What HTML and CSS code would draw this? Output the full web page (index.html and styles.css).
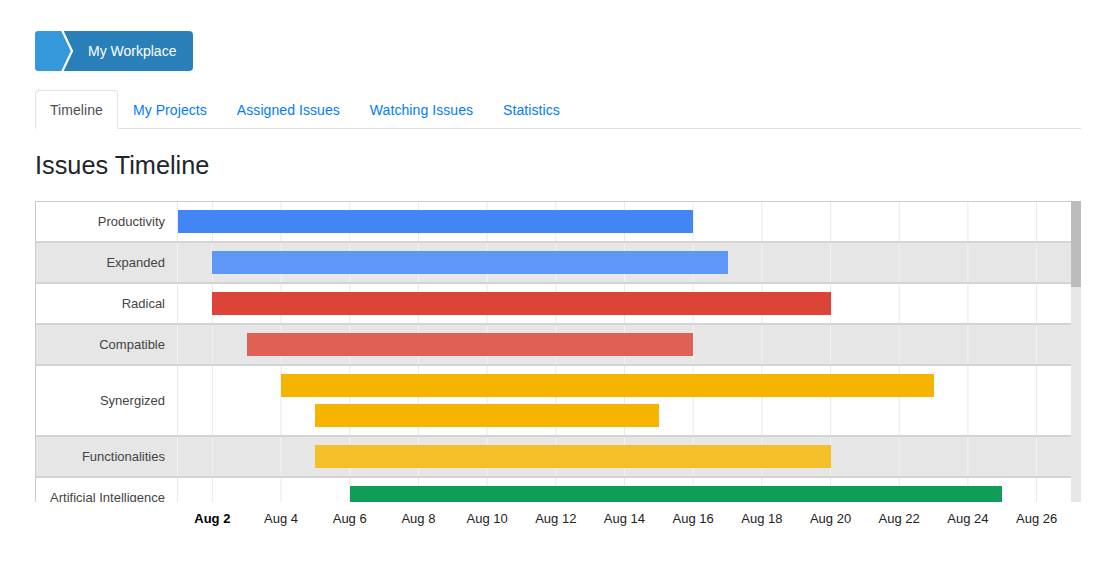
FILE: index.html
```html
<!DOCTYPE html>
<html lang="en">
<head>
<meta charset="utf-8">
<title>My Workplace - Timeline</title>
<link rel="stylesheet" href="styles.css">
</head>
<body>
<div class="page">
  <div class="crumb">
    <svg class="crumb-icon" width="40" height="40" viewBox="0 0 40 40" aria-hidden="true">
      <polygon points="0,0 26.5,0 36.5,20 26.5,40 0,40" fill="#3498db"/>
      <polyline points="27,-1 37,20 27,41" fill="none" stroke="#ffffff" stroke-width="2.2"/>
    </svg>
    <span class="crumb-text">My Workplace</span>
  </div>

  <ul class="tabs">
    <li><a class="tab active" href="#">Timeline</a></li>
    <li><a class="tab" href="#">My Projects</a></li>
    <li><a class="tab" href="#">Assigned Issues</a></li>
    <li><a class="tab" href="#">Watching Issues</a></li>
    <li><a class="tab" href="#">Statistics</a></li>
  </ul>

  <h2 class="title">Issues Timeline</h2>

  <div class="chart">
    <div class="chart-main">
      <div class="viewport">
        <div class="rows">
          <div class="row">
            <div class="label">Productivity</div>
            <div class="track"><div class="bar c1" style="margin-left:0%;width:57.692%"></div></div>
          </div>
          <div class="row alt">
            <div class="label">Expanded</div>
            <div class="track"><div class="bar c2" style="margin-left:3.846%;width:57.692%"></div></div>
          </div>
          <div class="row">
            <div class="label">Radical</div>
            <div class="track"><div class="bar c3" style="margin-left:3.846%;width:69.231%"></div></div>
          </div>
          <div class="row alt">
            <div class="label">Compatible</div>
            <div class="track"><div class="bar c4" style="margin-left:7.692%;width:50%"></div></div>
          </div>
          <div class="row">
            <div class="label">Synergized</div>
            <div class="track">
              <div class="bar c5" style="margin-left:11.538%;width:73.077%"></div>
              <div class="bar c5" style="margin-left:15.385%;width:38.462%"></div>
            </div>
          </div>
          <div class="row alt">
            <div class="label">Functionalities</div>
            <div class="track"><div class="bar c6" style="margin-left:15.385%;width:57.692%"></div></div>
          </div>
          <div class="row">
            <div class="label">Artificial Intelligence</div>
            <div class="track"><div class="bar c7" style="margin-left:19.231%;width:73.077%"></div></div>
          </div>
        </div>
      </div>
      <div class="scrollbar"><div class="thumb"></div></div>
    </div>
    <div class="axis">
      <span class="tick strong">Aug 2</span>
      <span class="tick">Aug 4</span>
      <span class="tick">Aug 6</span>
      <span class="tick">Aug 8</span>
      <span class="tick">Aug 10</span>
      <span class="tick">Aug 12</span>
      <span class="tick">Aug 14</span>
      <span class="tick">Aug 16</span>
      <span class="tick">Aug 18</span>
      <span class="tick">Aug 20</span>
      <span class="tick">Aug 22</span>
      <span class="tick">Aug 24</span>
      <span class="tick">Aug 26</span>
    </div>
  </div>
</div>
</body>
</html>
```

FILE: styles.css
```css
html, body {
  margin: 0;
  padding: 0;
  background: #ffffff;
}

body {
  font-family: "Liberation Sans", Arial, Helvetica, sans-serif;
  color: #212529;
}

.page {
  width: 1046px;
  padding: 31px 35px 0;
}

/* breadcrumb */
.crumb {
  display: inline-flex;
  align-items: center;
  height: 40px;
  background: #2980b9;
  border-radius: 4px;
  overflow: hidden;
  vertical-align: top;
}

.crumb-icon {
  display: block;
  flex: none;
}

.crumb-text {
  color: #ffffff;
  font-size: 14px;
  line-height: 18px;
  padding: 0 17px 0 13px;
}

/* tabs */
.tabs {
  list-style: none;
  margin: 19px 0 0;
  padding: 0;
  display: flex;
  border-bottom: 1px solid #dee2e6;
}

.tabs li {
  margin-bottom: -1px;
}

.tab {
  display: block;
  padding: 10px 14px 9px;
  font-size: 14px;
  line-height: 18px;
  letter-spacing: 0.07px;
  color: #007bff;
  text-decoration: none;
  border: 1px solid transparent;
  border-radius: 4px 4px 0 0;
}

.tab.active {
  color: #495057;
  border-color: #dee2e6 #dee2e6 #ffffff;
  background: #ffffff;
}

/* title */
.title {
  margin: 22px 0;
  font-size: 25.3px;
  line-height: 28px;
  font-weight: 400;
  color: #212529;
}

/* chart */
.chart-main {
  display: flex;
  height: 301px;
}

.viewport {
  flex: 1;
  height: 301px;
  overflow: hidden;
  border-left: 1px solid #cccccc;
}

.rows {
  border-top: 1px solid #cccccc;
}

.row {
  --grid: #e9e9e9;
  display: flex;
  background: #ffffff;
  border-bottom: 2px solid #d4d4d4;
}

.row.alt {
  --grid: #f3f3f3;
  background: #e6e6e6;
}

.label {
  flex: none;
  width: 142px;
  box-sizing: border-box;
  border-right: 1px solid var(--grid);
  display: flex;
  align-items: center;
  justify-content: flex-end;
  padding-right: 12px;
  font-size: 13px;
  line-height: 16px;
  color: #444444;
  white-space: nowrap;
}

.track {
  flex: 1;
  padding: 8px 0;
  background-image: linear-gradient(to right, transparent calc(100% - 1px), var(--grid) calc(100% - 1px));
  background-size: calc(100% / 13) 100%;
  background-position: -33.85px 0;
}

.bar {
  height: 23px;
}

.bar + .bar {
  margin-top: 7px;
}

.c1 { background: #4285f4; }
.c2 { background: #5e97f6; }
.c3 { background: #db4437; }
.c4 { background: #e06055; }
.c5 { background: #f4b400; }
.c6 { background: #f5bf2a; }
.c7 { background: #0f9d58; }

.scrollbar {
  flex: none;
  width: 10px;
  background: #e6e6e6;
}

.thumb {
  height: 86px;
  background: #bcbcbc;
}

.axis {
  display: flex;
  padding-left: 143px;
  margin-top: 9px;
}

.tick {
  flex: none;
  width: 68.69px;
  text-align: center;
  font-size: 13px;
  line-height: 16px;
  color: #222222;
  white-space: nowrap;
}

.tick.strong {
  font-weight: 700;
  color: #000000;
}
```
